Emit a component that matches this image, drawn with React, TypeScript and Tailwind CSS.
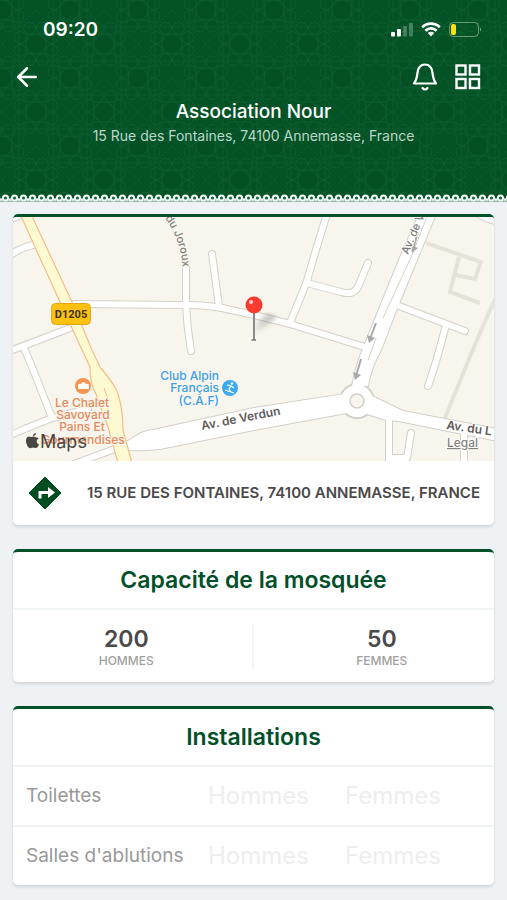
import { ArrowLeft } from "lucide-react";

const whiteRoads = [
  "M8 257Q20 247 38 244",
  "M8 220L24 214",
  "M71 304L187 305Q206 305 222 308L254 315L290 324L368 348",
  "M10 351L78 325",
  "M24 348Q32 366 52 418",
  "M10 435L52 418L88 409",
  "M74 464L128 444",
  "M186 267V305Q187 328 191 351",
  "M212 254L219 306",
  "M327 214Q312 262 307 281L290 323",
  "M307 283L341 292Q353 296 358 287L368 263",
  "M399 306L465 331",
  "M446 325Q436 364 428 386",
  "M389 420V466",
  "M389 458H407L411 433",
  "M464 434V466",
  "M474 211Q484 219 500 222",
];

const footPaths = [
  "M426 243L481 262L475 279L455 275",
  "M459 257L450 292L480 303",
  "M496 298Q484 321 445 418",
];

const avenues = [
  "M419 214L401 255L364 346Q357 362 352 386H368Q370 370 381 350L398 306L436 214Z",
  "M124 444Q142 430 153 430L254 408L344 394L352 412L254 430L160 449Q140 451 127 450Z",
  "M370 395L403 411L450 420L498 429V441L453 432L399 421L386 420L364 413Z",
];

const arrows = ["M376 323L370 339", "M361 359L356 376", "M418 232L413 249"];

function HeaderPattern() {
  const bigs = [
    [0, 10],
    [68, 10],
    [34, 44],
    [0, 78],
    [68, 78],
    [34, -24],
  ];
  const ring = [0, 45, 90, 135, 180, 225, 270, 315];
  return (
    <svg className="absolute inset-0 h-full w-full" aria-hidden="true">
      <defs>
        <pattern id="zellige" width="68" height="68" patternUnits="userSpaceOnUse" x="2">
          <g fill="none" stroke="#1a6a3c" strokeWidth="1" opacity="0.45">
            {bigs.map(([cx, cy]) => (
              <g key={cx + "-" + cy}>
                <circle cx={cx} cy={cy} r="10" fill="#004a1e" />
                {ring.map((a) => (
                  <circle
                    key={a}
                    cx={cx + 17 * Math.cos(((a + 22.5) * Math.PI) / 180)}
                    cy={cy + 17 * Math.sin(((a + 22.5) * Math.PI) / 180)}
                    r="6"
                  />
                ))}
              </g>
            ))}
            <path d="M0 44L34 10L68 44L34 78ZM0 27H68M0 61H68M17 0V68M51 0V68" opacity="0.6" />
          </g>
        </pattern>
      </defs>
      <rect width="100%" height="100%" fill="url(#zellige)" />
    </svg>
  );
}

function LaceBorder() {
  return (
    <svg className="absolute inset-x-0 bottom-0 h-2 w-full" aria-hidden="true">
      <defs>
        <pattern id="lace" width="9" height="8" patternUnits="userSpaceOnUse" x="1">
          <path d="M0 7H9" stroke="#8fb5a2" strokeWidth="2" />
          <circle cx="4.5" cy="4" r="2.6" fill="#1c6940" stroke="#f2f8f5" strokeWidth="2" />
          <circle cx="0" cy="5.6" r="1.3" fill="#f2f8f5" />
          <circle cx="9" cy="5.6" r="1.3" fill="#f2f8f5" />
        </pattern>
      </defs>
      <rect width="100%" height="8" fill="url(#lace)" />
    </svg>
  );
}

function StatusIcons() {
  return (
    <svg width="92" height="18" viewBox="390 20 92 18" aria-hidden="true">
      <g fill="#fff">
        <rect x="391" y="31" width="4" height="4.5" rx="1" />
        <rect x="397" y="28" width="4" height="7.5" rx="1" />
        <rect x="403" y="25" width="4" height="10.5" rx="1" opacity="0.25" />
        <rect x="409" y="22" width="4" height="13.5" rx="1" opacity="0.25" />
      </g>
      <g fill="none" stroke="#fff" strokeWidth="2.7">
        <path d="M422.2 26.2A12.5 12.5 0 0 1 439.8 26.2" />
        <path d="M425.4 29.7A8 8 0 0 1 436.6 29.7" />
      </g>
      <path d="M427.8 32.1A4.5 4.5 0 0 1 434.2 32.1L431 35.4Z" fill="#fff" />
      <rect x="449.5" y="21.5" width="29" height="14" rx="4" fill="none" stroke="#fff" strokeOpacity="0.4" />
      <path d="M480 26.5Q482 28.5 480 30.5Z" fill="#fff" opacity="0.5" />
      <rect x="451" y="23" width="5" height="11" rx="2" fill="#ffe00a" />
    </svg>
  );
}

function BellIcon() {
  return (
    <svg width="26" height="30" viewBox="0 0 26 30" fill="none" stroke="#fff" strokeWidth="2.2" aria-hidden="true">
      <path d="M2 21.5C4.500 18 5 15 5.500 11C6 5.500 8.500 2.500 13 2.500S20 5.500 20.500 11C21 15 21.500 18 24 21.500Z" strokeLinejoin="round" />
      <path d="M10.5 26Q13 29 15.5 26" strokeLinecap="round" />
    </svg>
  );
}

function GridIcon() {
  return (
    <svg width="26" height="26" viewBox="0 0 26 26" fill="none" stroke="#fff" strokeWidth="2.4" aria-hidden="true">
      <rect x="1.5" y="1.5" width="9" height="9" />
      <rect x="15" y="1.5" width="9" height="9" />
      <rect x="1.5" y="15" width="9" height="9" />
      <rect x="15" y="15" width="9" height="9" />
    </svg>
  );
}

function StreetMap() {
  return (
    <svg
      className="block h-[244px] w-full"
      viewBox="13 217 481 244"
      preserveAspectRatio="xMidYMid slice"
      role="img"
      aria-label="Association Nour"
    >
      <defs>
        <path id="joroux" d="M165 218Q181 240 183 270" />
        <linearGradient id="pinShadow" x1="0" x2="1" y1="1" y2="0">
          <stop offset="0" stopColor="#555" stopOpacity="0.1" />
          <stop offset="1" stopColor="#555" stopOpacity="0.4" />
        </linearGradient>
        <filter id="soft">
          <feGaussianBlur stdDeviation="2" />
        </filter>
      </defs>
      <rect x="0" y="200" width="520" height="280" fill="#f8f5ed" />
      <g fill="none" stroke="#e5e2d8" strokeWidth="4">
        {footPaths.map((d) => (
          <path key={d} d={d} />
        ))}
      </g>
      <g fill="none" stroke="#d3d0c9" strokeWidth="8" strokeLinecap="round" strokeLinejoin="round">
        {whiteRoads.map((d) => (
          <path key={d} d={d} />
        ))}
      </g>
      <g fill="#fff" stroke="#d3d0c9" strokeWidth="2">
        {avenues.map((d) => (
          <path key={d} d={d} />
        ))}
        <circle cx="357" cy="401" r="17" />
      </g>
      <g fill="none" stroke="#fff" strokeWidth="6" strokeLinecap="round" strokeLinejoin="round">
        {whiteRoads.map((d) => (
          <path key={d} d={d} />
        ))}
      </g>
      <g fill="#fff">
        {avenues.map((d) => (
          <path key={d} d={d} />
        ))}
        <circle cx="357" cy="401" r="16" />
      </g>
      <circle cx="357" cy="401" r="7" fill="#f8f5ed" stroke="#d3d0c9" strokeWidth="1.5" />
      <path d="M428 214L412 255L383 318M376 338L368 360" fill="none" stroke="#d3d0c9" strokeWidth="1" />
      <path
        d="M20 214L60 302L82 350L90 367Q90 384 96 394L108 427L118 463H132L123 430Q123 408 117 391Q112 381 100 367L92 350L72 302L31 214Z"
        fill="#fdf9d0"
        stroke="#f5bd8b"
        strokeWidth="1.2"
      />
      <path d="M104 388L108 399" stroke="#f5bd8b" />
      <g fill="none" stroke="#a9a9a9" strokeWidth="2">
        {arrows.map((d) => (
          <path key={d} d={d} />
        ))}
      </g>
      <g fill="#a9a9a9">
        <path d="M367 335L375 338L369 343Z" />
        <path d="M353 372L361 375L355 380Z" />
        <path d="M410 245L418 248L412 253Z" />
      </g>

      <g fontFamily="Inter, sans-serif" fontWeight="500" stroke="#fff" strokeWidth="2" paintOrder="stroke" strokeLinejoin="round">
        <text fontSize="11" fill="#85827e" stroke="#f8f5ed">
          <textPath href="#joroux">du Joroux</textPath>
        </text>
        <text fontSize="11" fill="#7c7a77" transform="translate(408 255) rotate(-67)">Av. de V</text>
        <text fontSize="12" fontWeight="600" fill="#5f5b59" transform="translate(202 430) rotate(-11)">Av. de Verdun</text>
        <text fontSize="12" fontWeight="600" fill="#5f5b59" transform="translate(446 429) rotate(8)">Av. du L</text>
        <g fontSize="12" fill="#e58a5c" textAnchor="middle" stroke="#f8f5ed">
          <text x="82" y="407">Le Chalet</text>
          <text x="83" y="419">Savoyard</text>
          <text x="82" y="431">Pains Et</text>
          <text x="83" y="444">Gourmandises</text>
        </g>
        <g fontSize="12" fill="#3d9fe8" textAnchor="end" stroke="#f8f5ed">
          <text x="219" y="380">Club Alpin</text>
          <text x="219" y="392">Français</text>
          <text x="219" y="405">(C.A.F)</text>
        </g>
        <text x="447" y="447" fontSize="12" fill="#86837f" textDecoration="underline">Legal</text>
      </g>

      <circle cx="83" cy="386" r="8" fill="#f49350" />
      <path d="M78 389V386Q78 383 81 384Q83 380 86 384Q89 383 89 386V389Z" fill="#fff" />
      <circle cx="230" cy="388" r="8" fill="#3da9f0" />
      <circle cx="232" cy="383.5" r="1.3" fill="#fff" />
      <path d="M227 385L231 386L229 389L231 392M225 390L234 393M231 386L234 388" fill="none" stroke="#fff" strokeWidth="1.2" />

      <rect x="51.5" y="303.5" width="39" height="21" rx="4" fill="#fcc111" stroke="#e3a51c" />
      <text x="71" y="318" textAnchor="middle" fontFamily="Roboto, sans-serif" fontWeight="700" fontSize="11" fill="#3d3212">D1205</text>

      <path d="M256 328Q262 308 277 317Q270 324 256 332Z" fill="url(#pinShadow)" filter="url(#soft)" />
      <path d="M254 312V340" stroke="#8b8b8b" strokeWidth="2" />
      <path d="M251.5 340H256" stroke="#777" strokeWidth="1.5" />
      <circle cx="254" cy="305" r="8.5" fill="#fb3b30" />
      <circle cx="251" cy="302" r="2" fill="#ffd0cb" />

      <path
        d="M36 437.5Q33.5 436 31 437C27 435 25.5 439 26.2 442.5C27 446 29 449 31 448Q33 447.2 35 448C37 448.6 38.5 446 39 444.5C36 443 36 440 38.6 438.5Q37.5 437 36 437.5ZM33 436Q33 433.5 36 433Q36 435.5 33 436Z"
        fill="#494643"
      />
      <text x="40" y="448" fontFamily="Inter, sans-serif" fontSize="18" fontWeight="400" fill="#494643">Maps</text>
    </svg>
  );
}

function DirectionsIcon() {
  return (
    <svg width="34" height="34" viewBox="0 0 34 34" aria-hidden="true">
      <path d="M17 1L33 17L17 33L1 17Z" fill="#004d22" stroke="#004d22" strokeLinejoin="round" />
      <path d="M10.5 22.5V15H20V11L27 16.5L20 22V18H13.5V22.5Z" fill="#fff" />
    </svg>
  );
}

const card = "overflow-hidden rounded-[5px] border-t-3 border-[#00502a] bg-white shadow-[0_2px_3px_rgba(0,0,0,0.12)]";
const heading = "border-b-2 border-[#f1f4f5] py-3 text-center text-[23px] leading-8 font-semibold text-[#00502a]";

const capacities = [
  { count: 200, label: "HOMMES" },
  { count: 50, label: "FEMMES" },
];

const facilities = ["Toilettes", "Salles d'ablutions"];

export default function App() {
  return (
    <div className="min-h-screen bg-[#eef2f5] pb-[14px] font-['Inter',sans-serif] text-[#4a4a4a]">
      <header className="relative bg-[#035327] pb-14 text-white">
        <HeaderPattern />
        <div className="relative">
          <div className="flex items-center justify-between pt-4 pr-[25px] pl-[43px]">
            <span className="text-[19px] leading-7 font-semibold">09:20</span>
            <StatusIcons />
          </div>
          <nav className="flex items-center justify-between pt-[18px] pr-[26px] pl-3">
            <button type="button" aria-label="Retour">
              <ArrowLeft size={30} strokeWidth={2} />
            </button>
            <div className="flex items-center gap-[17px]">
              <button type="button" aria-label="Notifications">
                <BellIcon />
              </button>
              <button type="button" aria-label="Menu">
                <GridIcon />
              </button>
            </div>
          </nav>
          <div className="pt-2 text-center">
            <h1 className="text-[19px] leading-6 font-medium">Association Nour</h1>
            <p className="pt-[2px] text-[14px] leading-5 text-[#bcd6c7]">15 Rue des Fontaines, 74100 Annemasse, France</p>
          </div>
        </div>
        <LaceBorder />
      </header>

      <main className="flex flex-col gap-6 px-[13px] pt-3">
        <section className={card}>
          <StreetMap />
          <a href="#itineraire" className="flex items-center justify-between py-[15px] pr-[14px] pl-[15px]">
            <DirectionsIcon />
            <span className="text-[15px] leading-5 font-semibold">15 RUE DES FONTAINES, 74100 ANNEMASSE, FRANCE</span>
          </a>
        </section>

        <section className={card}>
          <h2 className={heading}>Capacité de la mosquée</h2>
          <dl className="grid grid-cols-2 pt-[15px] pb-[13px]">
            {capacities.map((c, i) => (
              <div
                key={c.label}
                className={i === 0 ? "flex flex-col-reverse border-r-2 border-[#f4f5f6] pr-3 text-center" : "flex flex-col-reverse pl-4 text-center"}
              >
                <dt className="text-[12px] leading-4 font-medium text-[#a0a0a0]">{c.label}</dt>
                <dd className="text-[23px] leading-7 font-semibold">{c.count}</dd>
              </div>
            ))}
          </dl>
        </section>

        <section className={card}>
          <h2 className={heading}>Installations</h2>
          <table className="w-full table-fixed text-left">
            <colgroup>
              <col className="w-[195px]" />
              <col className="w-[137px]" />
              <col />
            </colgroup>
            <tbody>
              {facilities.map((f, i) => (
                <tr key={f} className={i === 0 ? "border-b-2 border-[#f1f4f5]" : ""}>
                  <th className="h-[59px] pl-[13px] text-[19px] font-normal whitespace-nowrap text-[#999]">{f}</th>
                  <td className="text-[24px] text-[#eee]">Hommes</td>
                  <td className="text-[24px] text-[#eee]">Femmes</td>
                </tr>
              ))}
            </tbody>
          </table>
        </section>
      </main>
    </div>
  );
}
